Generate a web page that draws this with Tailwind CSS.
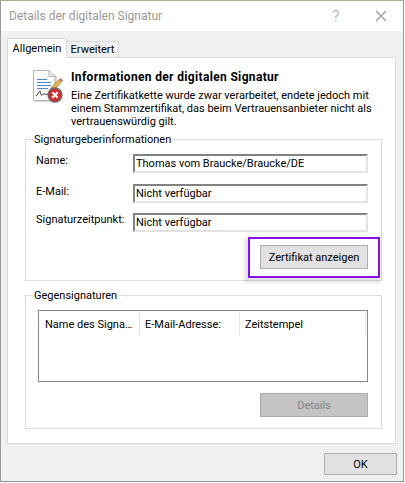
<!doctype html>
<html lang="de"><head><meta charset="utf-8"><script src="https://cdn.jsdelivr.net/npm/@tailwindcss/browser@4"></script></head>
<body class="bg-white">
<div class="w-[405px] h-[483px] overflow-hidden font-['Roboto',sans-serif] text-[11px] leading-[13px] text-black">
  <div class="w-[404px] h-[482px] flex flex-col border-l border-r border-b border-t border-l-[#9a9a9a] border-r-[#9a9a9a] border-b-[#8f8f8f] border-t-[#b5ab8c]">
    <div class="h-[30px] shrink-0 bg-white flex items-center pl-[8px] relative">
      <span class="text-[#999999] text-[12px] flex-1">Details der digitalen Signatur</span>
      <span class="w-[46px] text-center text-[#999999] text-[15px] font-light leading-none">?</span>
      <span class="w-[44px] flex justify-center"><svg width="12" height="12" viewBox="0 0 12 12"><path d="M1 1L11 11M11 1L1 11" stroke="#999999" stroke-width="1.2" fill="none"/></svg></span>
    </div>
    <div class="flex-1 bg-[#f0f0f0] pl-[6px] pr-[7px] pt-[7px] flex flex-col">
      <div class="flex items-end h-[20px] relative z-10">
        <div class="w-[60px] h-[20px] bg-white border border-b-0 border-[#d9d9d9] flex items-center justify-center">Allgemein</div>
        <div class="w-[52px] h-[17px] bg-[#f0f0f0] border border-l-0 border-[#d9d9d9] flex items-center justify-center">Erweitert</div>
      </div>
      <div class="h-[387px] -mt-px bg-white border border-[#d9d9d9] pt-[12px] pl-[17px] pr-[13px]">
        <div class="flex h-[69px]">
          <svg class="shrink-0 ml-[8px]" width="31" height="33" viewBox="0 0 31 33">
            <path d="M2 3H20L24 7V32H2Z" fill="#d8d8d8"/>
            <path d="M0.500 0.500H16L22 6.500V30.500H0.500Z" fill="#fbfbfb" stroke="#b4b4b4"/>
            <path d="M16 0.500V6.500H22" fill="#e8e8e8" stroke="#b4b4b4"/>
            <path d="M4 9.500H14M4 12.500H18M4 15.500H18M4 18.500H15" stroke="#4f85c9" stroke-width="1"/>
            <path d="M3 26C5 25 6 21 7 21C8 21 7 26 9 25C10 24.500 11 23 12 24C13 25 14 24 16 24" stroke="#333333" fill="none"/>
            <path d="M18 18L26 9.500L28.500 12L21 20L17 21Z" fill="#e9b94d" stroke="#8a6b3a" stroke-width="0.7"/>
            <path d="M26 9.500L27.500 8L30 10.500L28.500 12Z" fill="#d96a5a"/>
            <circle cx="22" cy="25" r="7" fill="#cc2b2f" stroke="#6d6d6d" stroke-width="1.300"/>
            <path d="M19.300 22.300L24.700 27.700M24.700 22.300L19.300 27.700" stroke="#ffffff" stroke-width="2"/>
          </svg>
          <div class="ml-[7px] flex flex-col">
            <div class="font-bold h-[18px] mt-[1px] text-[12px] tracking-[0.34px]">Informationen der digitalen Signatur</div>
            <div class="whitespace-nowrap">Eine Zertifikatkette wurde zwar verarbeitet, endete jedoch mit<br>einem Stammzertifikat, das beim Vertrauensanbieter nicht als<br>vertrauenswürdig gilt.</div>
          </div>
        </div>
        <fieldset class="relative h-[142px] border border-[#dcdcdc] pl-[10px] pr-[13px] pt-[14px]">
          <span class="absolute -top-[7px] left-[7px] bg-white px-[1px]">Signaturgeberinformationen</span>
          <div class="flex h-[30px]"><span class="w-[97px]">Name:</span><div class="w-[235px] h-[19px] border-2 border-t-[#828282] border-l-[#828282] border-r-[#e3e3e3] border-b-[#e3e3e3] flex items-center px-[1px]">Thomas vom Braucke/Braucke/DE</div></div>
          <div class="flex h-[29px]"><span class="w-[97px] mt-[1px]">E-Mail:</span><div class="w-[235px] h-[19px] border-2 border-t-[#828282] border-l-[#828282] border-r-[#e3e3e3] border-b-[#e3e3e3] flex items-center px-[1px]">Nicht verfügbar</div></div>
          <div class="flex h-[32px]"><span class="w-[97px]">Signaturzeitpunkt:</span><div class="w-[235px] h-[19px] border-2 border-t-[#828282] border-l-[#828282] border-r-[#e3e3e3] border-b-[#e3e3e3] flex items-center px-[1px]">Nicht verfügbar</div></div>
          <div class="flex justify-end">
            <button class="relative w-[108px] h-[24px] bg-[#e1e1e1] border border-[#adadad] flex items-center justify-center">Zertifikat anzeigen
              <span class="absolute -left-[13px] -top-[9px] w-[132px] h-[41px] border-2 border-[#8a0ee6] shadow-[-2px_3px_3px_2px_rgba(0,0,0,0.1)]"></span>
            </button>
          </div>
        </fieldset>
        <fieldset class="relative h-[134px] mt-[14px] border border-[#dcdcdc] pl-[12px] pr-[13px] pt-[14px]">
          <span class="absolute -top-[7px] left-[7px] bg-white px-[1px]">Gegensignaturen</span>
          <div class="w-[330px] h-[72px] border border-[#828790] pt-[1px]">
            <div class="flex h-[24px]">
              <div class="w-[101px] h-full border-r border-[#e5e5e5] flex items-center pl-[6px] whitespace-nowrap">Name des Signa…</div>
              <div class="w-[100px] h-full border-r border-[#e5e5e5] flex items-center pl-[5px]">E-Mail-Adresse:</div>
              <div class="w-[126px] h-full border-r border-[#e5e5e5] flex items-center pl-[5px]">Zeitstempel</div>
            </div>
          </div>
          <div class="flex justify-end mt-[11px]">
            <button class="w-[108px] h-[24px] bg-[#c4c4c4] border border-[#adadad] text-[#838383] flex items-center justify-center">Details</button>
          </div>
        </fieldset>
      </div>
      <div class="flex justify-end mt-[9px] -mr-px">
        <button class="w-[73px] h-[22px] bg-[#e1e1e1] border border-[#adadad] flex items-center justify-center">OK</button>
      </div>
    </div>
  </div>
</div>
</body></html>
